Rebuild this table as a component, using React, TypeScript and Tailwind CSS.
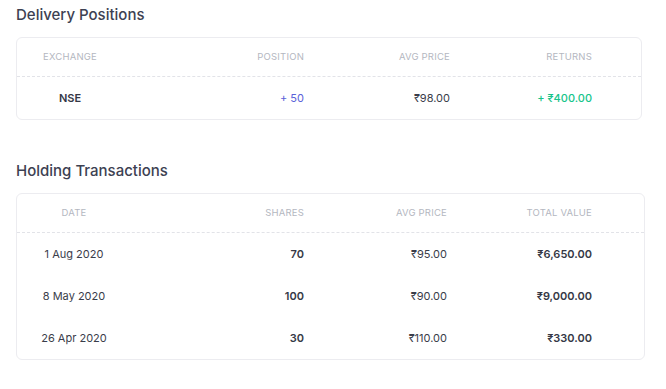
import React from "react";

type Cell = { text: string; cls?: string };

const deliveryHead = ["EXCHANGE", "POSITION", "AVG PRICE", "RETURNS"];
const deliveryRows: Cell[][] = [
  [
    { text: "NSE", cls: "font-semibold text-[#353846]" },
    { text: "+ 50", cls: "text-[#5a61d9]" },
    { text: "₹98.00", cls: "text-[#3a3d4a]" },
    { text: "+ ₹400.00", cls: "text-[#16c48a] font-medium" },
  ],
];

const holdingHead = ["DATE", "SHARES", "AVG PRICE", "TOTAL VALUE"];
const holdingRows: Cell[][] = [
  ["1 Aug 2020", "70", "₹95.00", "₹6,650.00"],
  ["8 May 2020", "100", "₹90.00", "₹9,000.00"],
  ["26 Apr 2020", "30", "₹110.00", "₹330.00"],
].map((r) => [
  { text: r[0], cls: "text-[#3a3d4a]" },
  { text: r[1], cls: "font-semibold text-[#353846]" },
  { text: r[2], cls: "text-[#3a3d4a]" },
  { text: r[3], cls: "font-semibold text-[#353846]" },
]);

function Table({
  head,
  rows,
  cols,
  width,
}: {
  head: string[];
  rows: Cell[][];
  cols: string;
  width: string;
}) {
  return (
    <div className={`${width} rounded-[6px] border border-[#ececf0] bg-white`}>
      <div className={`grid ${cols} h-[38px] items-center text-[9.5px] tracking-[0.2px] text-[#b4b7bf]`}>
        {head.map((h, i) => (
          <div key={h} className={i === 0 ? "text-center" : "text-right"}>
            {h}
          </div>
        ))}
      </div>
      <div className="border-t border-dashed border-[#e2e3e8]" />
      {rows.map((row, ri) => (
        <div key={ri} className={`grid ${cols} h-[42px] items-center text-[11px]`}>
          {row.map((c, i) => (
            <div key={i} className={`${i === 0 ? "text-center" : "text-right"} ${c.cls ?? ""}`}>
              {c.text}
            </div>
          ))}
        </div>
      ))}
    </div>
  );
}

export default function App() {
  return (
    <div
      className="w-[666px] h-[389px] bg-white px-[16px] pt-[5px]"
      style={{ fontFamily: "Inter, Roboto, 'Noto Sans', sans-serif" }}
    >
      <h2 className="text-[15px] leading-[20px] font-medium text-[#3d4152]">Delivery Positions</h2>
      <div className="mt-[12px]">
        <Table
          head={deliveryHead}
          rows={deliveryRows}
          cols="grid-cols-[106px_181px_146px_142px_1fr]"
          width="w-[626px]"
        />
      </div>
      <h2 className="mt-[41px] text-[15px] leading-[20px] font-medium text-[#3d4152]">Holding Transactions</h2>
      <div className="mt-[12px]">
        <Table
          head={holdingHead}
          rows={holdingRows}
          cols="grid-cols-[114px_173px_143px_145px_1fr]"
          width="w-[629px]"
        />
      </div>
    </div>
  );
}
